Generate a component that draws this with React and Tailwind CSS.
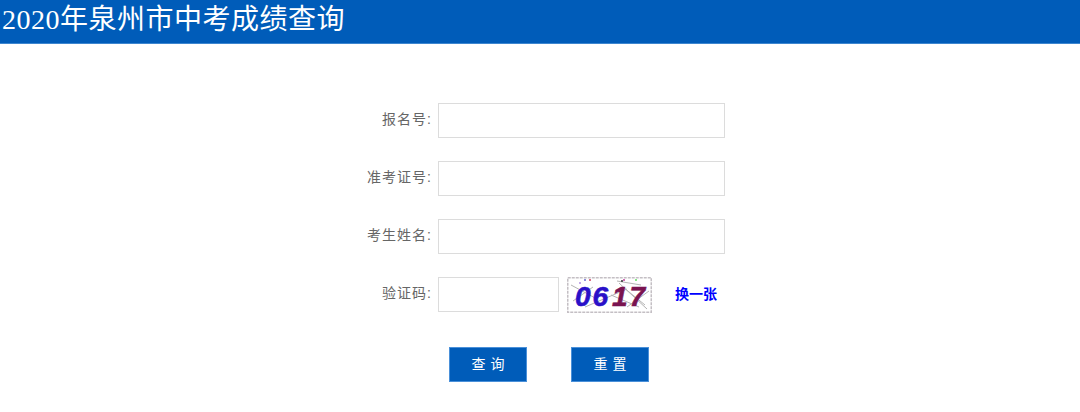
import React from 'react';

const cjk = "font-['Liberation_Sans','Noto_Sans_CJK_SC',sans-serif]";

const Field = ({ label, children }) => (
  <div className="flex items-center h-[35px] mb-[23px]">
    <label className="w-[94px] pb-[2px] text-right text-[14px] tracking-[1px] text-[#666666]">{label}:</label>
    <div className="w-[6px]"></div>
    {children}
  </div>
);

const Captcha = () => (
  <svg width="85" height="36" viewBox="0 0 85 36" className="ml-2 block">
    <rect x="0.75" y="0.75" width="83.5" height="34.5" fill="#fff" stroke="#c4bfc4" strokeWidth="1.5" strokeDasharray="3 1" />
    <path d="M4 8 L30 22 M18 30 L60 12 M52 6 L80 32 M60 30 L82 14 M44 18 L72 30 M6 24 L26 10 M50 4 L74 8 M56 10 L78 28" stroke="#b4b4b4" strokeWidth="1" fill="none" />
    <circle cx="18" cy="3" r="1" fill="#6a6ad0" />
    <circle cx="23" cy="3" r="1" fill="#d04060" />
    <circle cx="55" cy="4" r="1" fill="#303030" />
    <circle cx="57" cy="3" r="1" fill="#c040a0" />
    <circle cx="69" cy="3" r="1" fill="#60e060" />
    <circle cx="13" cy="6" r="1" fill="#b090e0" />
    <text y="29" fontFamily="Liberation Sans" fontWeight="700" fontStyle="italic" fontSize="28" strokeWidth="0.6" letterSpacing="2">
      <tspan x="8" fill="#2a10c8" stroke="#2a10c8">06</tspan>
      <tspan x="45" fill="#7a1450" stroke="#7a1450">17</tspan>
    </text>
  </svg>
);

export default function App() {
  return (
    <div className={`min-h-[412px] bg-white ${cjk}`}>
      <div className="h-[44px] bg-[#005cb9] border-b border-[#3d86cf] pl-[2px] flex items-center">
        <h1 className="text-[28px] leading-[40px] mb-[4px] tracking-[0.5px] font-normal text-white font-['Liberation_Serif','Noto_Sans_CJK_SC',serif]">
          2020年泉州市中考成绩查询
        </h1>
      </div>

      <div className="pl-[338px] pt-[59px]">
        <Field label="报名号">
          <input className="w-[287px] h-[35px] border border-[#dcdcdc] outline-none" />
        </Field>
        <Field label="准考证号">
          <input className="w-[287px] h-[35px] border border-[#dcdcdc] outline-none" />
        </Field>
        <Field label="考生姓名">
          <input className="w-[287px] h-[35px] border border-[#dcdcdc] outline-none" />
        </Field>
        <Field label="验证码">
          <input className="w-[121px] h-[35px] border border-[#dcdcdc] outline-none" />
          <Captcha />
          <a href="#" className="ml-[23px] text-[14px] font-bold text-[#0000ff]">换一张</a>
        </Field>

        <div className="flex pl-[111px] gap-[44px] pt-[12px]">
          <button className="w-[78px] h-[35px] pl-[5px] bg-[#005cb9] border border-[#4a90d9] text-white text-[14px] tracking-[5px]">查询</button>
          <button className="w-[78px] h-[35px] pl-[5px] bg-[#005cb9] border border-[#4a90d9] text-white text-[14px] tracking-[5px]">重置</button>
        </div>
      </div>
    </div>
  );
}
